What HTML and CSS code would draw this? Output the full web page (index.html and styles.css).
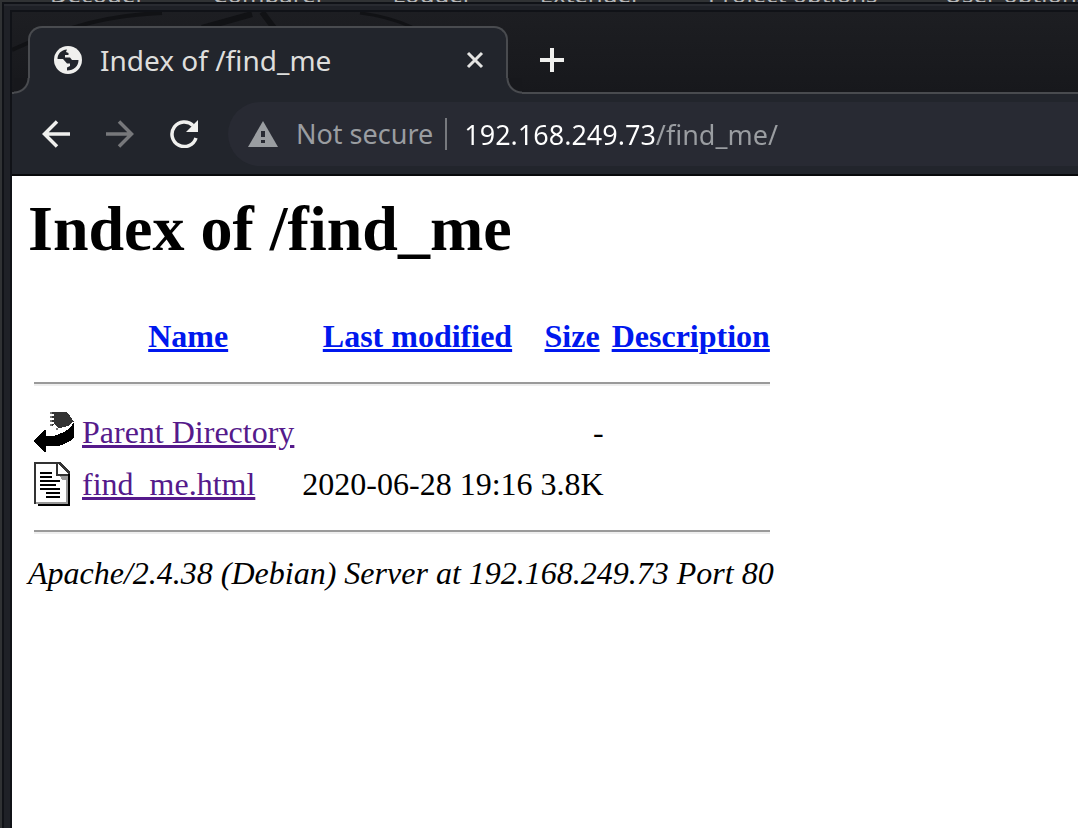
FILE: index.html
```html
<!DOCTYPE html>
<html lang="en">
<head>
    <meta charset="UTF-8">
    <meta name="viewport" content="width=device-width, initial-scale=1.0">
    <title>Index of /find_me</title>
    <link rel="stylesheet" href="styles.css">
</head>
<body>

    <!-- Window behind the browser -->
    <nav class="back-tabs">
        <a href="#">Decoder</a>
        <a href="#">Comparer</a>
        <a href="#">Logger</a>
        <a href="#">Extender</a>
        <a href="#">Project options</a>
        <a href="#">User options</a>
    </nav>

    <div class="desktop">
        <div class="window">

            <!-- Tab strip -->
            <div class="tab-strip">
                <svg class="wallpaper" width="420" height="82" viewBox="0 0 420 82" fill="none" stroke="#111215" aria-hidden="true">
                    <path d="M0 38L18 30M60 16Q100 3 150 1" stroke-width="4"/>
                    <path d="M190 16L240 2M250 0L262 16" stroke-width="6"/>
                    <path d="M348 1Q375 4 400 15" stroke-width="3"/>
                </svg>
                <div class="tab">
                    <svg class="globe" width="28" height="28" viewBox="0 0 28 28" aria-hidden="true">
                        <circle cx="14" cy="14" r="14" fill="#f0f0ee"/>
                        <path d="M3.500 13C3.500 8 7 4 13 3.500L12 6L14.500 7V9H11V11.500H16L18 14H24.500C24.500 20 20 24.500 13 24.500V21.500L16 20V17.500H13L9 13Z" fill="#22252c"/>
                    </svg>
                    <span class="tab-title">Index of /find_me</span>
                    <button class="icon-button" aria-label="Close tab">
                        <svg width="18" height="18" viewBox="0 0 18 18" stroke="#e4e4e2" stroke-width="3"><path d="M2 2L16 16M16 2L2 16"/></svg>
                    </button>
                </div>
                <button class="icon-button new-tab" aria-label="New tab">
                    <svg width="24" height="24" viewBox="0 0 24 24" stroke="#f0f0ee" stroke-width="4"><path d="M12 0V24M0 12H24"/></svg>
                </button>
            </div>

            <!-- Toolbar -->
            <div class="toolbar">
                <button class="icon-button" aria-label="Back">
                    <svg width="28" height="28" viewBox="0 0 28 28" fill="none" stroke="#f0f0ee" stroke-width="3.500"><path d="M28 14H3M15 1.500L2.500 14L15 26.500"/></svg>
                </button>
                <button class="icon-button" aria-label="Forward">
                    <svg width="28" height="28" viewBox="0 0 28 28" fill="none" stroke="#77787b" stroke-width="3.500"><path d="M0 14H25M13 1.500L25.500 14L13 26.500"/></svg>
                </button>
                <button class="icon-button" aria-label="Reload">
                    <svg width="28" height="28" viewBox="0 0 28 28" fill="none" stroke="#f0f0ee" stroke-width="3.500"><path d="M26 18A12.300 12.300 0 1 1 23 5.500"/><path d="M28 0V12H16Z" fill="#f0f0ee" stroke="none"/></svg>
                </button>
                <div class="address-bar">
                    <svg width="30" height="26" viewBox="0 0 30 26" aria-hidden="true">
                        <path d="M15 0L30 26H0Z" fill="#9a9da1"/>
                        <path d="M13 10H17V16H13ZM13 19H17V22H13Z" fill="#282a33"/>
                    </svg>
                    <label for="url">Not secure</label>
                    <input id="url" class="url" type="text" value="192.168.249.73/find_me/" spellcheck="false">
                </div>
            </div>

            <!-- Page -->
            <main>
                <h1>Index of /find_me</h1>
                <table>
                    <tr>
                        <th><span class="blank-icon"></span></th>
                        <th><a href="#">Name</a></th>
                        <th><a href="#">Last modified</a></th>
                        <th><a href="#">Size</a></th>
                        <th><a href="#">Description</a></th>
                    </tr>
                    <tr><th colspan="5"><hr></th></tr>
                    <tr>
                        <td>
                            <svg width="40" height="44" viewBox="0 0 40 44" shape-rendering="crispEdges" role="img" aria-label="[PARENTDIR]">
                                <path d="M18 2H32L36 6L40 12H38L34 16L26 18L24 18L20 14L18 16Z" fill="#333"/>
                                <path d="M16 2H18V4H16ZM16 6H18V8H16ZM16 10H18V12H16ZM16 14H18V16H16ZM22 18H24V20H22Z" fill="#777"/>
                                <path d="M18 4H20V6H18ZM18 8H20V10H18ZM18 12H20V14H18Z" fill="#fff"/>
                                <path d="M40 12V28L36 31L30 34L24 36H12V42H10L0 32V30L10 20H12V26H20L30 22L36 18Z" fill="#000"/>
                            </svg>
                        </td>
                        <td><a class="visited" href="#">Parent Directory</a></td>
                        <td>&nbsp;</td>
                        <td class="right">-</td>
                        <td>&nbsp;</td>
                    </tr>
                    <tr>
                        <td>
                            <svg width="40" height="44" viewBox="0 0 40 44" shape-rendering="crispEdges" role="img" aria-label="[TXT]">
                                <path d="M4 42H34V12H36V44H4Z" fill="#000"/>
                                <path d="M0 0H26L36 10V42H0Z" fill="#333"/>
                                <path d="M2 2H22V14H32V40H2Z" fill="#fff"/>
                                <path d="M24 2L34 12H24Z" fill="#fff"/>
                                <path d="M26 14H34V42H2V40H32V18H28Z" fill="#999"/>
                                <path d="M34 12H36V44H34Z" fill="#000"/>
                                <path d="M6 11H18M6 15H18M6 19H26M6 23H22M6 27H26M12 31H26M12 35H26" stroke="#000" stroke-width="2"/>
                            </svg>
                        </td>
                        <td><a class="visited" href="#">find_me.html</a></td>
                        <td class="right">2020-06-28 19:16</td>
                        <td class="right">3.8K</td>
                        <td>&nbsp;</td>
                    </tr>
                    <tr><th colspan="5"><hr></th></tr>
                </table>
                <address>Apache/2.4.38 (Debian) Server at 192.168.249.73 Port 80</address>
            </main>
        </div>
    </div>

</body>
</html>
```
FILE: styles.css
```css
* {
    box-sizing: border-box;
}

body {
    margin: 0;
    min-height: 100vh;
    display: flex;
    flex-direction: column;
    background: #303234;
    font-family: "Noto Sans", sans-serif;
    overflow: hidden;
}

.back-tabs {
    display: flex;
    align-items: flex-end;
    gap: 67px;
    height: 2px;
    padding-left: 50px;
    overflow: hidden;
    font-size: 24px;
    line-height: 16px;
    white-space: nowrap;
}

.back-tabs a {
    color: #b8b9ba;
    text-decoration: none;
}

/* window frame */
.desktop {
    flex: 1;
    display: flex;
    margin-left: 2px;
    padding: 6px 0 0 6px;
    border: solid #101217;
    border-width: 2px 0 0 2px;
    background: #1f2127;
    box-shadow: inset 0 2px #292b31;
}

.window {
    flex: 1;
    min-width: 0;
    display: flex;
    flex-direction: column;
    border: solid #101217;
    border-width: 2px 0 0 2px;
}

.icon-button {
    display: flex;
    padding: 0;
    border: none;
    background: none;
    cursor: pointer;
}

/* tab strip */
.tab-strip {
    position: relative;
    display: flex;
    align-items: flex-end;
    height: 82px;
    padding-left: 16px;
    border-bottom: 2px solid #494b4f;
    background: linear-gradient(#1d1e22, #17181c);
}

.wallpaper {
    position: absolute;
    left: 0;
    top: 0;
}

.tab {
    position: relative;
    display: flex;
    align-items: center;
    width: 480px;
    height: 68px;
    margin-bottom: -2px;
    padding: 0 22px 2px 24px;
    border: 2px solid #494b4f;
    border-bottom: none;
    border-radius: 14px 14px 0 0;
    background: #22252c;
    color: #dededc;
    font-size: 28px;
}

.tab::before,
.tab::after {
    content: "";
    position: absolute;
    bottom: 0;
    width: 16px;
    height: 16px;
}

.tab::before {
    left: -16px;
    background: radial-gradient(circle at 0 0, #17181c 13px, #494b4f 14px, #494b4f 15px, #22252c 16px);
}

.tab::after {
    right: -16px;
    background: radial-gradient(circle at 100% 0, #17181c 13px, #494b4f 14px, #494b4f 15px, #22252c 16px);
}

.tab-title {
    flex: 1;
    margin-left: 18px;
    line-height: 32px;
}

.new-tab {
    margin: 0 0 20px 32px;
}

/* toolbar */
.toolbar {
    display: flex;
    align-items: center;
    gap: 36px;
    height: 82px;
    padding-left: 30px;
    border-bottom: 2px solid #08090b;
    background: #22252c;
}

.address-bar {
    flex: 1;
    display: flex;
    align-items: center;
    height: 64px;
    margin-left: -6px;
    padding-left: 20px;
    border-radius: 32px 0 0 32px;
    background: #282a33;
    color: #9a9da1;
    font-size: 27px;
}

.address-bar label {
    margin-left: 18px;
    padding-right: 12px;
    border-right: 2px solid #77797e;
    line-height: 32px;
    white-space: nowrap;
}

/* host is bright, path is dimmed */
.url {
    flex: 1;
    min-width: 0;
    margin-left: 17px;
    padding: 0;
    border: none;
    outline: none;
    background: linear-gradient(90deg, #fff 192px, #9a9da1 192px);
    -webkit-background-clip: text;
    background-clip: text;
    color: transparent;
    font: inherit;
}

/* directory listing */
main {
    flex: 1;
    padding: 16px;
    background: #fff;
    color: #000;
    font-family: "Liberation Serif", serif;
    font-size: 32px;
}

h1 {
    margin: 0 0 43px;
    font-size: 64px;
    line-height: 73px;
}

table {
    border-spacing: 4px;
}

th,
td {
    padding: 2px;
    line-height: 34px;
    white-space: nowrap;
}

td svg {
    display: block;
}

.blank-icon {
    display: block;
    width: 40px;
    height: 44px;
}

.right {
    text-align: right;
}

main a {
    color: #0018ee;
}

main a.visited {
    color: #551a8b;
}

hr {
    margin: 16px 0;
    border: solid;
    border-width: 2px 0;
    border-color: #9a9a9a #fff #eee;
}

address {
    line-height: 34px;
}
```
